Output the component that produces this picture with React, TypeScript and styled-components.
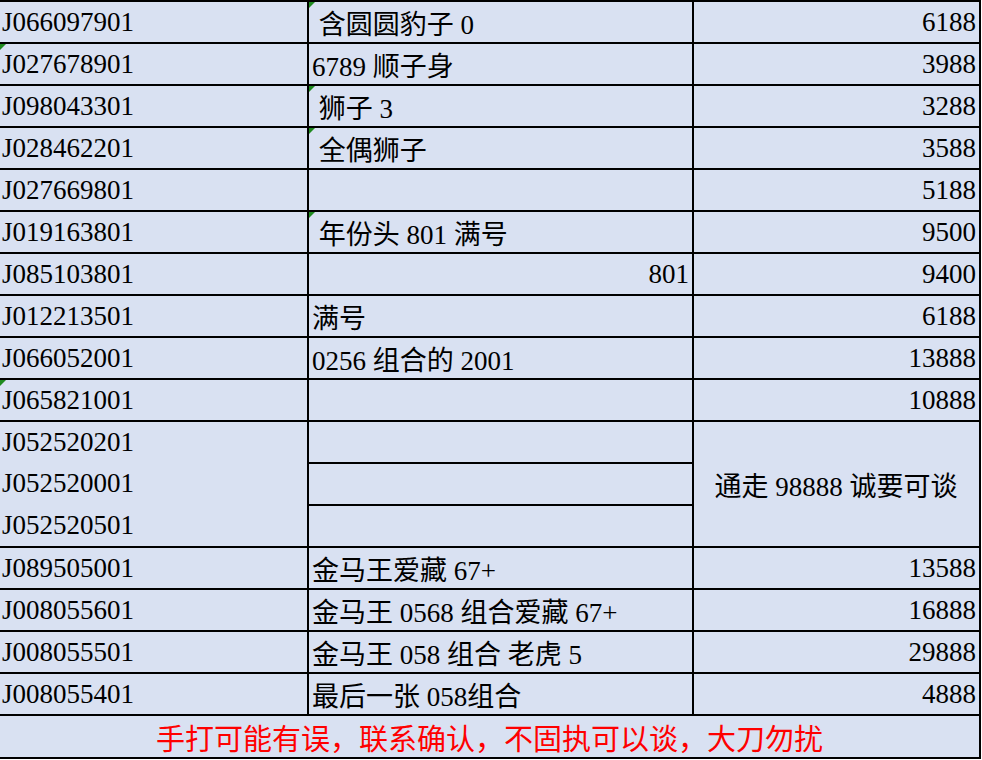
import React from "react";
import styled, { createGlobalStyle } from "styled-components";

const GlobalStyle = createGlobalStyle`
  html, body {
    margin: 0;
    padding: 0;
    background: #ffffff;
  }
`;

type Align = "left" | "right" | "center";

interface Row {
  id: string;
  idMark?: boolean;
  note: string;
  noteMark?: boolean;
  noteAlign?: Align;
  price: string;
}

const Sheet = styled.div`
  display: grid;
  grid-template-columns: 309px 385px 287px;
  grid-template-rows: repeat(17, 42px) 43px;
  width: 981px;
  border-top: 2px solid #000;
  background: #d9e1f2;
  font-family: "Liberation Serif", "Noto Sans CJK SC", serif;
  font-size: 27px;
  color: #000;
`;

const Cell = styled.div<{ $align?: Align; $rows?: number; $mark?: boolean }>`
  position: relative;
  box-sizing: border-box;
  display: flex;
  align-items: center;
  justify-content: ${(p) =>
    p.$align === "right" ? "flex-end" : p.$align === "center" ? "center" : "flex-start"};
  grid-row: span ${(p) => p.$rows || 1};
  padding: 0 3px 0 2px;
  border-right: 2px solid #000;
  border-bottom: 2px solid #000;
  white-space: pre;
  overflow: hidden;

  &::before {
    content: "";
    display: ${(p) => (p.$mark ? "block" : "none")};
    position: absolute;
    top: 0;
    left: 0;
    border-top: 6px solid #1f8a1f;
    border-right: 6px solid transparent;
  }
`;

const NoteCell = styled(Cell)`
  padding-left: 3px;
`;

const IdStack = styled.div`
  display: grid;
  grid-template-rows: repeat(3, 1fr);
  height: 100%;
  width: 100%;
  align-items: center;
`;

const Footer = styled.div`
  grid-column: 1 / -1;
  box-sizing: border-box;
  display: flex;
  align-items: center;
  justify-content: center;
  border-right: 2px solid #000;
  border-bottom: 2px solid #000;
  color: #ff0000;
  font-size: 29px;
`;

const topRows: Row[] = [
  { id: "J066097901", note: " 含圆圆豹子 0", noteMark: true, price: "6188" },
  { id: "J027678901", idMark: true, note: "6789 顺子身", price: "3988" },
  { id: "J098043301", note: " 狮子 3", noteMark: true, price: "3288" },
  { id: "J028462201", note: " 全偶狮子", noteMark: true, price: "3588" },
  { id: "J027669801", note: "", price: "5188" },
  { id: "J019163801", note: " 年份头 801 满号", noteMark: true, price: "9500" },
  { id: "J085103801", note: "801", noteAlign: "right", price: "9400" },
  { id: "J012213501", note: "满号", price: "6188" },
  { id: "J066052001", note: "0256 组合的 2001", price: "13888" },
  { id: "J065821001", idMark: true, note: "", price: "10888" },
];

const groupIds = ["J052520201", "J052520001", "J052520501"];

const bottomRows: Row[] = [
  { id: "J089505001", note: "金马王爱藏 67+", price: "13588" },
  { id: "J008055601", note: "金马王 0568 组合爱藏 67+", price: "16888" },
  { id: "J008055501", note: "金马王 058 组合 老虎 5", price: "29888" },
  { id: "J008055401", note: "最后一张 058组合", price: "4888" },
];

const SheetRow = ({ row }: { row: Row }) => (
  <>
    <Cell $mark={row.idMark}>{row.id}</Cell>
    <NoteCell $mark={row.noteMark} $align={row.noteAlign}>
      {row.note}
    </NoteCell>
    <Cell $align="right">{row.price}</Cell>
  </>
);

export default function App() {
  return (
    <>
      <GlobalStyle />
      <Sheet>
        {topRows.map((r) => (
          <SheetRow key={r.id} row={r} />
        ))}

        <Cell $rows={3}>
          <IdStack>
            {groupIds.map((id) => (
              <span key={id}>{id}</span>
            ))}
          </IdStack>
        </Cell>
        <NoteCell />
        <Cell $rows={3} $align="center">
          通走 98888 诚要可谈
        </Cell>
        <NoteCell style={{ gridColumn: 2 }} />
        <NoteCell style={{ gridColumn: 2 }} />

        {bottomRows.map((r) => (
          <SheetRow key={r.id} row={r} />
        ))}

        <Footer>手打可能有误，联系确认，不固执可以谈，大刀勿扰</Footer>
      </Sheet>
    </>
  );
}
